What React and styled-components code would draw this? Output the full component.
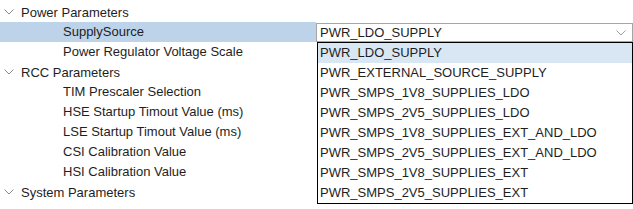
import styled, { createGlobalStyle } from "styled-components";

const GlobalStyle = createGlobalStyle`
  html, body {
    margin: 0;
    padding: 0;
    background: #ffffff;
  }
  body {
    font-family: "Liberation Sans", Arial, sans-serif;
    font-size: 13px;
    color: #1e1e1e;
  }
`;

const params = [
  {
    group: "Power Parameters",
    items: [
      { name: "SupplySource", value: "PWR_LDO_SUPPLY", open: true },
      { name: "Power Regulator Voltage Scale" },
    ],
  },
  {
    group: "RCC Parameters",
    items: [
      { name: "TIM Prescaler Selection" },
      { name: "HSE Startup Timout Value (ms)" },
      { name: "LSE Startup Timout Value (ms)" },
      { name: "CSI Calibration Value" },
      { name: "HSI Calibration Value" },
    ],
  },
  { group: "System Parameters", items: [] },
];

const options = [
  "PWR_LDO_SUPPLY",
  "PWR_EXTERNAL_SOURCE_SUPPLY",
  "PWR_SMPS_1V8_SUPPLIES_LDO",
  "PWR_SMPS_2V5_SUPPLIES_LDO",
  "PWR_SMPS_1V8_SUPPLIES_EXT_AND_LDO",
  "PWR_SMPS_2V5_SUPPLIES_EXT_AND_LDO",
  "PWR_SMPS_1V8_SUPPLIES_EXT",
  "PWR_SMPS_2V5_SUPPLIES_EXT",
];

const Tree = styled.div`
  position: relative;
  width: 633px;
  height: 209px;
  padding-top: 2px;
  box-sizing: border-box;
  overflow: hidden;
`;

const Row = styled.div`
  display: grid;
  grid-template-columns: 316px 1fr;
  height: 20px;
  align-items: center;
`;

const GroupLabel = styled.div`
  display: flex;
  align-items: center;
  height: 20px;
  gap: 7px;
  padding-left: 4px;
`;

const NameCell = styled.div`
  height: 20px;
  line-height: 20px;
  padding-left: 63px;
  background: ${(p) => (p.$selected ? "#bcd3ea" : "transparent")};
  white-space: nowrap;
`;

const ValueCell = styled.div`
  height: 20px;
  position: relative;
`;

const SelectBox = styled.div`
  display: flex;
  align-items: center;
  justify-content: space-between;
  height: 19px;
  margin-top: 1px;
  box-sizing: border-box;
  border: 1px solid #a6a6a6;
  padding: 0 6px 0 3px;
  background: #fff;
`;

const DropList = styled.ul`
  position: absolute;
  left: 1px;
  top: 20px;
  width: 314px;
  margin: 0;
  padding: 0;
  list-style: none;
  border: 1px solid #000;
  background: #fff;
  z-index: 2;
`;

const Option = styled.li`
  height: 20px;
  line-height: 20px;
  padding-left: 2px;
  background: ${(p) => (p.$active ? "#d9e6f4" : "#fff")};
  white-space: nowrap;
`;

const Chevron = ({ color = "#8a8a8a", w = 10 }) => (
  <svg width={w} height="6" viewBox="0 0 10 6">
    <polyline points="0.5,0.5 5,5 9.5,0.5" fill="none" stroke={color} strokeWidth="1" />
  </svg>
);

export default function App() {
  return (
    <>
      <GlobalStyle />
      <Tree>
        {params.map((g) => (
          <div key={g.group}>
            <GroupLabel>
              <Chevron />
              <span>{g.group}</span>
            </GroupLabel>
            {g.items.map((it) => (
              <Row key={it.name}>
                <NameCell $selected={it.open}>{it.name}</NameCell>
                <ValueCell>
                  {it.open && (
                    <>
                      <SelectBox>
                        <span>{it.value}</span>
                        <Chevron color="#a0a0a0" w={10} />
                      </SelectBox>
                      <DropList>
                        {options.map((o, i) => (
                          <Option key={o} $active={i === 0}>
                            {o}
                          </Option>
                        ))}
                      </DropList>
                    </>
                  )}
                </ValueCell>
              </Row>
            ))}
          </div>
        ))}
      </Tree>
    </>
  );
}
